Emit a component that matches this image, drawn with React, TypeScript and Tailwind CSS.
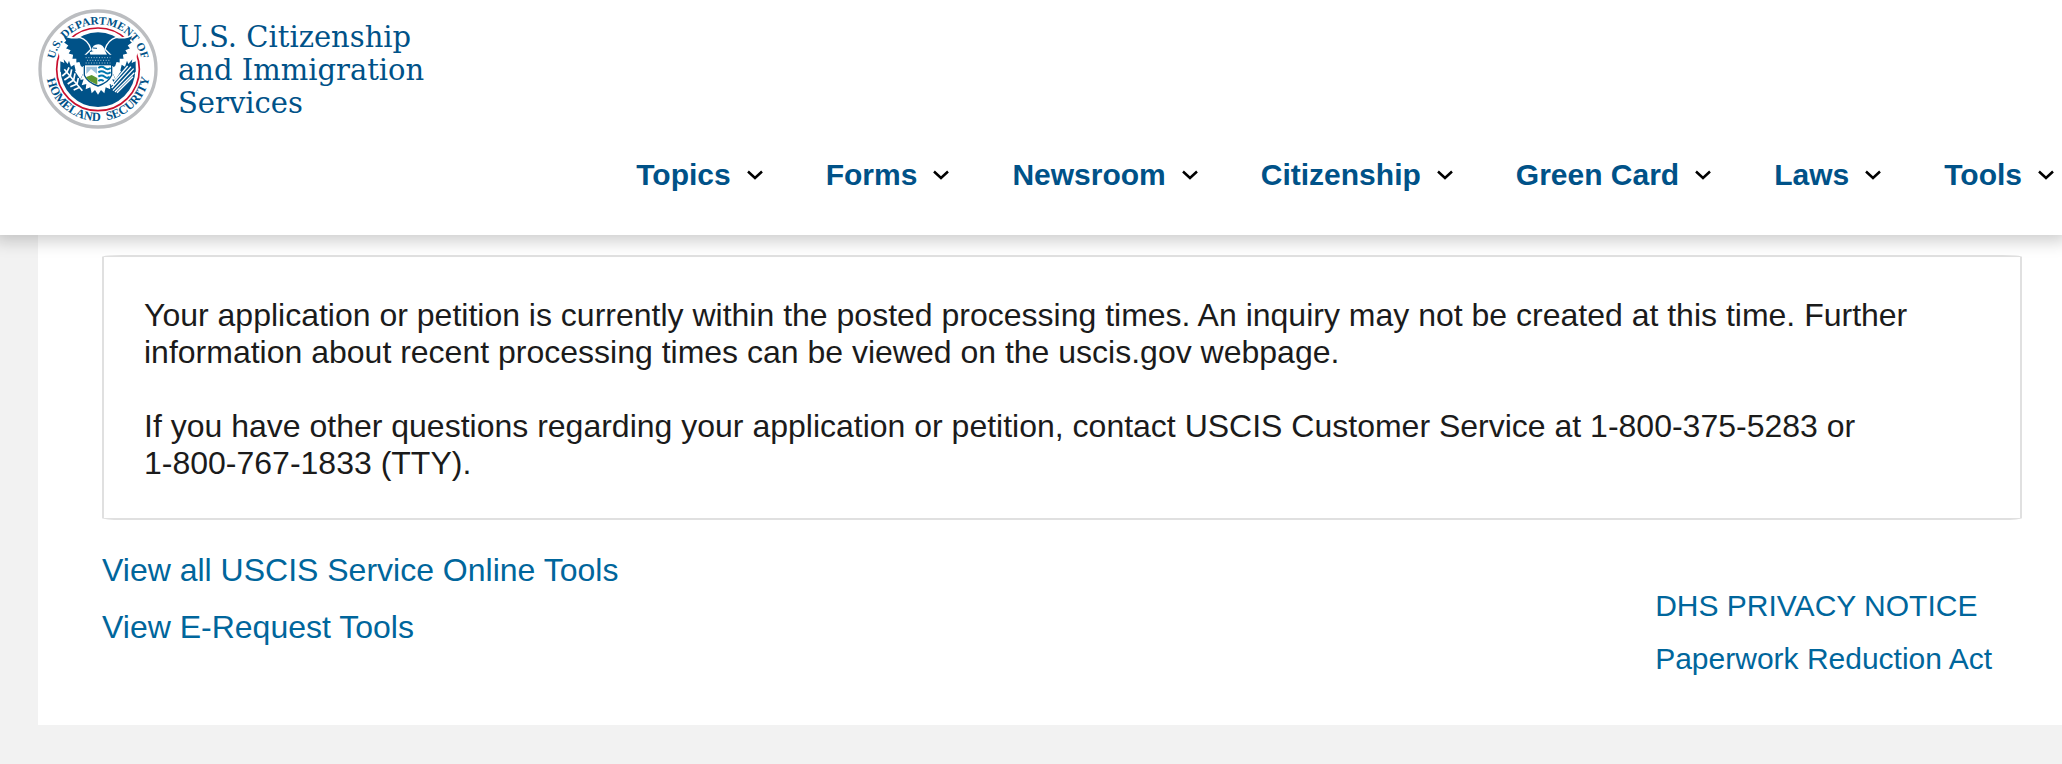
import React from "react";

interface NavItem {
  label: string;
  href: string;
}

const navItems: NavItem[] = [
  { label: "Topics", href: "#topics" },
  { label: "Forms", href: "#forms" },
  { label: "Newsroom", href: "#newsroom" },
  { label: "Citizenship", href: "#citizenship" },
  { label: "Green Card", href: "#green-card" },
  { label: "Laws", href: "#laws" },
  { label: "Tools", href: "#tools" },
];

const Wing: React.FC = () => (
  <>
    <path d="M78 112L92 102L112 112L170 200L152 238Q132 200 92 184Z" fill="#fff" />
    <path d="M92 184L104 190L102 178L114 192L118 182L124 200L134 194L138 212L120 230L92 215Z" fill="#005288" />
    <path
      d="M97 103Q122 118 150 112Q176 120 184 148L166 166V208L152 200L148 188L138 190L138 178L126 178L128 166L114 162L120 152L106 146L113 137L100 128L107 122Z"
      fill="#005288"
      stroke="#fff"
      strokeWidth="4"
    />
  </>
);

const Seal: React.FC = () => (
  <svg viewBox="25 27 360 360" className="h-[120px] w-[120px] shrink-0" aria-hidden="true">
    <defs>
      <path id="seal-top" d="M71 207a134 134 0 0 1 268 0" />
      <path id="seal-bottom" d="M49 207a156 156 0 0 0 312 0" />
    </defs>
    <circle cx="205" cy="207" r="174" fill="#fff" stroke="#bbbdc0" strokeWidth="10" />
    <circle cx="205" cy="208" r="124" fill="#fff" stroke="#c8102e" strokeWidth="5" />
    <circle cx="205" cy="209" r="112" fill="#005288" />

    {/* wings */}
    <Wing />
    <g transform="translate(410 0) scale(-1 1)">
      <Wing />
    </g>

    {/* lettering */}
    <g fill="#005288" fontFamily="'Liberation Serif', serif" fontWeight="bold" textAnchor="middle">
      <text fontSize="34">
        <textPath href="#seal-top" startOffset="50%">U.S. DEPARTMENT OF</textPath>
      </text>
      <text fontSize="37">
        <textPath href="#seal-bottom" startOffset="29%">HOMELAND</textPath>
      </text>
      <text fontSize="37">
        <textPath href="#seal-bottom" startOffset="75%">SECURITY</textPath>
      </text>
    </g>

    {/* head */}
    <path d="M186 152Q188 133 206 133Q222 134 226 152L232 164H182L180 157L192 153Z" fill="#fff" />
    <path d="M190 144L202 145" stroke="#005288" strokeWidth="3" />
    {/* body and legs */}
    <path
      d="M160 198L152 222L160 222L152 240L162 238L156 256L170 252L168 268L182 262L186 280L196 270L205 284L214 270L224 280L228 262L242 268L240 252L254 256L248 238L258 240L250 222L258 222L250 198Z"
      fill="#fff"
    />
    {/* shield */}
    <path d="M164 166H246V226Q236 248 205 258Q174 248 164 226Z" fill="#fff" stroke="#005288" strokeWidth="4" />
    <path d="M164 166H246V196H164Z" fill="#005288" />
    <path d="M168 173H242M172 181H242M168 189H242" stroke="#fff" strokeWidth="2" strokeDasharray="3 5" />
    <path d="M170 200H202V222L184 207L170 222Z" fill="#9dc3dd" />
    <path d="M168 232L186 225L203 234V254Q180 246 168 232Z" fill="#5e9732" />
    <path
      d="M206 204q10-7 19 0t18 0M206 217q10-7 19 0t18 0M206 230q10-7 19 0t15 0M206 243q8-6 16 0"
      fill="none"
      stroke="#0078ae"
      strokeWidth="6"
    />
    {/* olive branch */}
    <path
      d="M104 208L158 272M112 216l-14 12M112 216l6-14M122 228l-18 12M122 228l4-20M132 240l-18 12M132 240l4-20M142 252l-20 8M142 252l4-18M150 262l-18 8"
      stroke="#fff"
      strokeWidth="5"
    />
    {/* arrows */}
    <path d="M312 206L250 272M304 200L246 264M294 198L244 256M314 218L256 276M310 230L262 278" stroke="#fff" strokeWidth="4" />
  </svg>
);

const ChevronDown: React.FC = () => (
  <svg viewBox="0 0 16 10" className="h-[10px] w-4" fill="none" stroke="#000" strokeWidth="2.5" aria-hidden="true">
    <path d="M1 1.5L8 8L15 1.5" />
  </svg>
);

const App: React.FC = () => {
  return (
    <div className="min-h-screen overflow-x-clip bg-[#f2f2f2] font-['Liberation_Sans',Arial,sans-serif] text-[#1b1b1b]">
      {/* Header */}
      <header className="relative bg-white pb-[43px] shadow-[0_0_16px_6px_rgba(0,0,0,0.2)]">
        <a href="#home" className="flex w-fit items-start gap-5 pt-[9px] pl-[38px] text-[#005288]">
          <Seal />
          <span className="pt-3 font-['DejaVu_Serif',serif] text-[29px] leading-[33px]">
            U.S. Citizenship
            <br />
            and Immigration
            <br />
            Services
          </span>
        </a>
        <nav className="mt-7 flex justify-end gap-[63px] pr-2">
          {navItems.map((item) => (
            <button
              key={item.label}
              type="button"
              className="flex shrink-0 items-center gap-4 text-[30px] leading-[35px] font-bold text-[#005288]"
            >
              {item.label}
              <ChevronDown />
            </button>
          ))}
        </nav>
      </header>

      {/* Content */}
      <main className="ml-[38px] bg-white pt-5 pr-10 pb-[49px] pl-16">
        <section className="rounded-[20px/2px] border-2 border-[#e0e0e0] px-10 pt-10 pb-9 text-[32px] leading-[37px]">
          <p>
            Your application or petition is currently within the posted processing times. An inquiry may not be created
            at this time. Further information about recent processing times can be viewed on the uscis.gov webpage.
          </p>
          <p className="mt-[37px]">
            If you have other questions regarding your application or petition, contact USCIS Customer Service at
            1-800-375-5283 or <span className="whitespace-nowrap">1-800-767-1833</span> (TTY).
          </p>
        </section>

        <div className="flex items-start justify-between pr-[30px]">
          <ul className="mt-8 space-y-5 text-[32px] leading-[37px] text-[#00669c]">
            <li>
              <a href="#online-tools">View all USCIS Service Online Tools</a>
            </li>
            <li>
              <a href="#e-request">View E-Request Tools</a>
            </li>
          </ul>
          <ul className="mt-[68px] space-y-[18px] text-[30px] leading-[35px] text-[#00669c]">
            <li>
              <a href="#privacy">DHS PRIVACY NOTICE</a>
            </li>
            <li>
              <a href="#paperwork">Paperwork Reduction Act</a>
            </li>
          </ul>
        </div>
      </main>
    </div>
  );
};

export default App;
